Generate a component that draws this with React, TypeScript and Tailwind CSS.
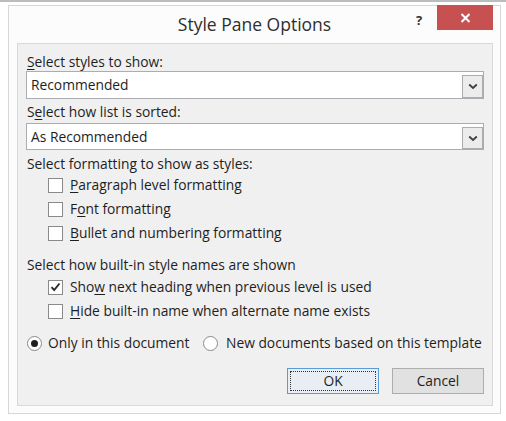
import React from "react";

const FONT = { fontFamily: '"Open Sans", "Noto Sans", "DejaVu Sans", sans-serif' };

function Accel({ children }: { children: React.ReactNode }) {
  return <span className="underline decoration-1 underline-offset-[2px]">{children}</span>;
}

function CheckBox({ checked = false }: { checked?: boolean }) {
  return (
    <div className="w-[15px] h-[15px] shrink-0 border border-[#8a8a8a] bg-white flex items-center justify-center">
      {checked && (
        <svg width="11" height="10" viewBox="0 0 11 10">
          <path d="M1.5 5.2 L4.2 8 L9.5 1.5" fill="none" stroke="#2a2a2a" strokeWidth="1.9" />
        </svg>
      )}
    </div>
  );
}

function Radio({ checked = false }: { checked?: boolean }) {
  return (
    <div className="w-[15px] h-[15px] shrink-0 rounded-full border border-[#8a8a8a] bg-white flex items-center justify-center">
      {checked && <div className="w-[7px] h-[7px] rounded-full bg-[#1f1f1f]" />}
    </div>
  );
}

function Combo({ value, height }: { value: string; height: string }) {
  return (
    <div className={`${height} flex items-stretch border border-[#abadb3] bg-white`}>
      <div className="flex-1 flex items-center pl-[4px]">{value}</div>
      <div className="w-[21px] mt-[3px] border border-[#acacac] bg-[#ececec] flex items-center justify-center">
        <svg width="10" height="7" viewBox="0 0 10 7">
          <path d="M1.2 1.5 L5 5 L8.8 1.5" fill="none" stroke="#3f3f3f" strokeWidth="1.8" />
        </svg>
      </div>
    </div>
  );
}

function CheckRow({ checked, children }: { checked?: boolean; children: React.ReactNode }) {
  return (
    <div className="h-[24px] flex items-center gap-[7px] pl-[22px]">
      <CheckBox checked={checked} />
      <span>{children}</span>
    </div>
  );
}

export default function App() {
  return (
    <div className="w-[506px] h-[421px] bg-white overflow-hidden text-[#1e1e1e]" style={FONT}>
      <div className="h-[2px] bg-[#bcbcbc]" />

      {/* Dialog window */}
      <div className="ml-[8px] mt-[3px] w-[493px] h-[409px] border border-[#d6d6d6] bg-[#fcfcfc] flex flex-col">
        {/* Title bar */}
        <div className="h-[37px] grid grid-cols-[1fr_auto_1fr] items-start">
          <div />
          <div className="pt-[6px] text-[17.5px] leading-[24px] text-[#2e2e2e]">Style Pane Options</div>
          <div className="flex justify-end items-start mr-[7px]">
            <div className="w-[26px] mt-[6px] mr-[5px] text-center text-[13px] font-bold leading-[16px] text-[#333]">?</div>
            <div className="w-[56px] h-[25px] -mt-[1px] bg-[#c75050] flex items-center justify-center">
              <svg width="11" height="10" viewBox="0 0 11 10">
                <path d="M1.5 1 L9.5 9 M9.5 1 L1.5 9" stroke="#ffffff" strokeWidth="2" />
              </svg>
            </div>
          </div>
        </div>

        {/* Content panel */}
        <div className="ml-[8px] w-[476px] h-[363px] border border-[#d9d9d9] bg-[#f0f0f0] px-[8px] pt-[9px] text-[13.8px] leading-[18px]">
          <div className="h-[18px] pl-[1px]">
            <Accel>S</Accel>elect styles to show:
          </div>
          <Combo value="Recommended" height="h-[28px]" />

          <div className="h-[18px] mt-[4px] pl-[1px]">
            S<Accel>e</Accel>lect how list is sorted:
          </div>
          <div className="mt-[2px]">
            <Combo value="As Recommended" height="h-[27px]" />
          </div>

          <div className="h-[18px] mt-[5px] pl-[1px]">Select formatting to show as styles:</div>
          <CheckRow>
            <Accel>P</Accel>aragraph level formatting
          </CheckRow>
          <CheckRow>
            F<Accel>o</Accel>nt formatting
          </CheckRow>
          <CheckRow>
            <Accel>B</Accel>ullet and numbering formatting
          </CheckRow>

          <div className="h-[18px] mt-[11px] pl-[1px]">Select how built-in style names are shown</div>
          <div className="mt-[1px]">
            <CheckRow checked>
              Sho<Accel>w</Accel> next heading when previous level is used
            </CheckRow>
            <CheckRow>
              <Accel>H</Accel>ide built-in name when alternate name exists
            </CheckRow>
          </div>

          <div className="h-[24px] mt-[8px] pl-[1px] flex items-center">
            <div className="w-[176px] flex items-center gap-[6px]">
              <Radio checked />
              <span>Only in this document</span>
            </div>
            <div className="flex items-center gap-[8px]">
              <Radio />
              <span>New documents based on this template</span>
            </div>
          </div>

          <div className="mt-[13px] flex justify-end gap-[13px]">
            <div className="w-[92px] h-[26px] border border-[#5b9bd5] bg-[#e8eef4] p-[2px]">
              <div className="h-full border border-dotted border-[#333] flex items-center justify-center">OK</div>
            </div>
            <div className="w-[92px] h-[26px] border border-[#adadad] bg-[#e1e1e1] flex items-center justify-center">
              Cancel
            </div>
          </div>
        </div>
      </div>
    </div>
  );
}
